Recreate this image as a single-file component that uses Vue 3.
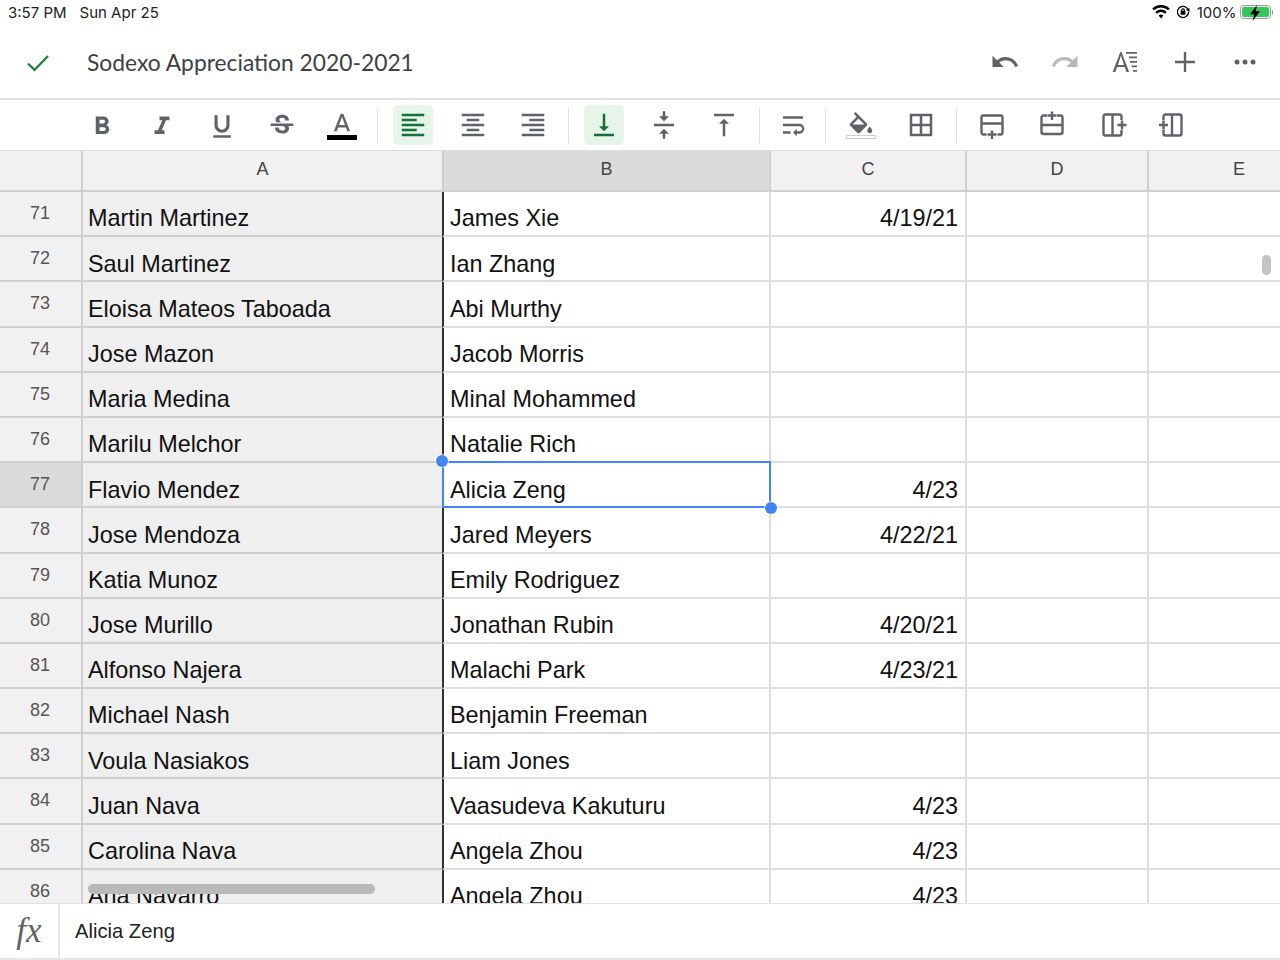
<script setup>
const rows = [
  [71, 'Martin Martinez', 'James Xie', '4/19/21'],
  [72, 'Saul Martinez', 'Ian Zhang', ''],
  [73, 'Eloisa Mateos Taboada', 'Abi Murthy', ''],
  [74, 'Jose Mazon', 'Jacob Morris', ''],
  [75, 'Maria Medina', 'Minal Mohammed', ''],
  [76, 'Marilu Melchor', 'Natalie Rich', ''],
  [77, 'Flavio Mendez', 'Alicia Zeng', '4/23'],
  [78, 'Jose Mendoza', 'Jared Meyers', '4/22/21'],
  [79, 'Katia Munoz', 'Emily Rodriguez', ''],
  [80, 'Jose Murillo', 'Jonathan Rubin', '4/20/21'],
  [81, 'Alfonso Najera', 'Malachi Park', '4/23/21'],
  [82, 'Michael Nash', 'Benjamin Freeman', ''],
  [83, 'Voula Nasiakos', 'Liam Jones', ''],
  [84, 'Juan Nava', 'Vaasudeva Kakuturu', '4/23'],
  [85, 'Carolina Nava', 'Angela Zhou', '4/23'],
  [86, 'Ana Navarro', 'Angela Zhou', '4/23'],
]

const groups = [
  [
    { shift: 1.5, d: 'M15.6 10.79c.97-.67 1.65-1.77 1.65-2.79 0-2.26-1.75-4-4-4H7v14h7.04c2.09 0 3.71-1.7 3.71-3.79 0-1.52-.86-2.82-2.15-3.42zM10 6.5h3c.83 0 1.5.67 1.5 1.5s-.67 1.5-1.5 1.5h-3v-3zm3.5 9H10v-3h3.5c.83 0 1.5.67 1.5 1.5s-.67 1.5-1.5 1.5z' },
    { shift: 1.5, d: 'M10 4v3h2.21l-3.42 8H6v3h8v-3h-2.21l3.42-8H18V4z' },
    { shift: 1.5, d: 'M12 17c3.31 0 6-2.69 6-6V3h-2.5v8c0 1.93-1.57 3.5-3.5 3.5S8.5 12.93 8.5 11V3H6v8c0 3.31 2.69 6 6 6zm-7 2v2h14v-2H5z' },
    { shift: 1, d: 'M7.24 8.75c-.26-.48-.39-1.03-.39-1.67 0-.61.13-1.16.4-1.67.26-.5.63-.93 1.11-1.29.48-.35 1.05-.63 1.7-.83.66-.19 1.39-.29 2.18-.29.81 0 1.54.11 2.21.34.66.22 1.23.54 1.69.94.47.4.83.88 1.08 1.43.25.55.38 1.15.38 1.81h-3.01c0-.31-.05-.59-.15-.85-.09-.27-.24-.49-.44-.68-.2-.19-.45-.33-.75-.44-.3-.1-.66-.16-1.06-.16-.39 0-.74.04-1.03.13-.29.09-.53.21-.72.36-.19.16-.34.34-.44.55-.1.21-.15.43-.15.66 0 .48.25.88.74 1.21.38.25.77.48 1.41.7H7.39c-.05-.08-.11-.17-.15-.25zM21 12v-2H3v2h9.62c.18.07.4.14.55.2.37.17.66.34.87.51.21.17.35.36.43.57.07.2.11.43.11.69 0 .23-.05.45-.14.66-.09.2-.23.38-.42.53-.19.15-.42.26-.71.35-.29.08-.63.13-1.01.13-.43 0-.83-.04-1.18-.13s-.66-.23-.91-.42c-.25-.19-.45-.44-.59-.75-.14-.31-.25-.76-.25-1.21H6.4c0 .55.08 1.13.24 1.58.16.45.37.85.65 1.21.28.35.6.66.98.92.37.26.78.48 1.22.65.44.17.9.3 1.38.39.48.08.96.13 1.44.13.8 0 1.53-.09 2.18-.28s1.21-.45 1.67-.79c.46-.34.82-.77 1.07-1.27s.38-1.07.38-1.71c0-.6-.1-1.14-.31-1.61-.05-.11-.11-.23-.17-.33H21z' },
    { d: 'M11 3L5.5 17h2.25l1.12-3h6.25l1.12 3h2.25L13 3h-2zm-1.38 9L12 5.67 14.38 12H9.62z', bar: 'black' },
  ],
  [
    { d: 'M15 15H3v2h12v-2zm0-8H3v2h12V7zM3 13h18v-2H3v2zm0 8h18v-2H3v2zM3 3v2h18V3H3z', active: true },
    { d: 'M7 15v2h10v-2H7zm-4 6h18v-2H3v2zm0-8h18v-2H3v2zm4-6v2h10V7H7zM3 3v2h18V3H3z' },
    { d: 'M3 21h18v-2H3v2zm6-4h12v-2H9v2zm-6-4h18v-2H3v2zm6-4h12V7H9v2zM3 3v2h18V3H3z' },
  ],
  [
    { d: 'M16 13h-3V3h-2v10H8l4 4 4-4zM4 19v2h16v-2H4z', active: true },
    { d: 'M8 19h3v4h2v-4h3l-4-4-4 4zm8-14h-3V1h-2v4H8l4 4 4-4zM4 11v2h16v-2H4z' },
    { d: 'M8 11h3v10h2V11h3l-4-4-4 4zM4 3v2h16V3H4z' },
  ],
  [
    { d: 'M4 19h6v-2H4v2zM20 5H4v2h16V5zm-3 6H4v2h13.25c1.1 0 2 .9 2 2s-.9 2-2 2H15v-2l-3 3 3 3v-2h2c2.21 0 4-1.79 4-4s-1.79-4-4-4z' },
  ],
  [
    { d: 'M16.56 8.94L7.62 0 6.21 1.41l2.38 2.38-5.15 5.15c-.59.59-.59 1.54 0 2.12l5.5 5.5c.29.29.68.44 1.06.44s.77-.15 1.06-.44l5.5-5.5c.59-.58.59-1.53 0-2.12zM5.21 10L10 5.21 14.79 10H5.21zM19 11.5s-2 2.17-2 3.5c0 1.1.9 2 2 2s2-.9 2-2c0-1.33-2-3.5-2-3.5z', shift: 2, bar: 'empty' },
    { d: 'M3 3v18h18V3H3zm8 16H5v-6h6v6zm0-8H5V5h6v6zm8 8h-6v-6h6v6zm0-8h-6V5h6v6z' },
  ],
  [
    { s: 'M9.500 24.500H6.500a2 2 0 0 1-2-2V7.500a2 2 0 0 1 2-2h17a2 2 0 0 1 2 2v15a2 2 0 0 1-2 2h-3M4.500 13.500h21M15 20.500v8.500M10.500 24.500h9' },
    { s: 'M10 5.500H6.500a2 2 0 0 0-2 2v14.500a2 2 0 0 0 2 2h17a2 2 0 0 0 2-2V7.500a2 2 0 0 0-2-2H20M4.500 15h21M15 1.500v8.500M10.500 5.500h9' },
    { s: 'M22.500 10V6.500a2 2 0 0 0-2-2h-14a2 2 0 0 0-2 2v17a2 2 0 0 0 2 2h14a2 2 0 0 0 2-2V20M13.500 4.500v21M18.500 15h9M23 10.500v9' },
    { s: 'M7.500 10V6.500a2 2 0 0 1 2-2h14a2 2 0 0 1 2 2v17a2 2 0 0 1-2 2h-14a2 2 0 0 1-2-2V20M16 4.500v21M3 15h9M7.500 10.500v9' },
  ],
]
</script>

<template>
  <div class="page">
    <div class="status">
      <span class="time">3:57 PM</span>
      <span class="date">Sun Apr 25</span>
      <span class="spacer"></span>
      <svg class="wifi" viewBox="0 0 18 14" width="18" height="14">
        <path d="M9 13.500 6.600 10.600a3.400 3.400 0 0 1 4.800 0zM4.900 8.700 3.300 6.900a8.200 8.200 0 0 1 11.400 0l-1.600 1.800a5.800 5.800 0 0 0-8.200 0zM1.900 5.300.2 3.500a12.600 12.600 0 0 1 17.600 0l-1.700 1.800a10.200 10.200 0 0 0-14.200 0z" />
      </svg>
      <svg class="lock" viewBox="0 0 14 14" width="14" height="14">
        <path d="M11.900 4.200A5.600 5.600 0 1 0 12.600 7" />
        <path class="solid" d="M10 4.800 13.600 3 13.400 7z" />
        <rect class="solid" x="4.600" y="6" width="4.800" height="3.800" rx=".6" />
        <path d="M5.700 6V5.200a1.300 1.300 0 0 1 2.600 0V6" />
      </svg>
      <span class="pct">100%</span>
      <span class="battery">
        <span class="level"></span>
        <svg class="bolt" viewBox="0 0 12 16" width="12" height="16"><path d="M8 0 1 9.200h4.200L3.600 16l7.400-9.800H6.700z" /></svg>
      </span>
      <span class="nub"></span>
    </div>

    <header class="titlebar">
      <svg class="check" viewBox="0 0 24 18" width="24" height="18"><path d="M2 9.500 8.500 16 22 2" /></svg>
      <span class="title">Sodexo Appreciation 2020-2021</span>
      <span class="spacer"></span>
      <div class="actions">
        <svg class="act" viewBox="0 0 30 30"><g transform="scale(1.25)"><path d="M12.500 8c-2.650 0-5.050.99-6.900 2.600L2 7v9h9l-3.620-3.620c1.390-1.160 3.160-1.880 5.120-1.880 3.540 0 6.550 2.310 7.600 5.500l2.370-.78C21.080 11.030 17.150 8 12.500 8z" /></g></svg>
        <svg class="act off" viewBox="0 0 30 30"><g transform="scale(1.25)"><path d="M18.400 10.600C16.550 8.990 14.150 8 11.500 8c-4.650 0-8.580 3.030-9.960 7.220L3.900 16c1.050-3.190 4.050-5.500 7.600-5.500 1.950 0 3.730.72 5.120 1.880L13 16h9V7l-3.600 3.600z" /></g></svg>
        <svg class="act" viewBox="0 0 30 30">
          <path d="M10.300 5 2.700 25h2.600l1.800-5h7.600l1.800 5h2.600L11.500 5zM7.900 18 10.900 8.500 14 18z" />
          <path d="M16 5h11v1.700H16zM19 9.500h8v1.700h-8zM20 14h7v1.700h-7zM21.500 18.500h5.500v1.700h-5.500zM23 23h4v1.700h-4z" />
        </svg>
        <svg class="act" viewBox="0 0 30 30"><path d="M13.800 5h2.400v8.800H25v2.400h-8.800V25h-2.400v-8.800H5v-2.400h8.800z" /></svg>
        <svg class="act" viewBox="0 0 30 30"><circle cx="7" cy="15" r="2.500" /><circle cx="15" cy="15" r="2.500" /><circle cx="23" cy="15" r="2.500" /></svg>
      </div>
    </header>

    <div class="toolbar">
      <template v-for="(group, g) in groups" :key="g">
        <span v-if="g > 0" class="divider" :class="'d' + g"></span>
        <div class="group" :class="'g' + g">
          <button v-for="(item, i) in group" :key="i" class="tool" :class="{ active: item.active }">
            <svg viewBox="0 0 30 30" width="30" height="30">
              <g v-if="item.d" :transform="`translate(0 ${item.shift || 0}) scale(1.25)`"><path :d="item.d" /></g>
              <path v-if="item.s" class="line" :d="item.s" />
              <rect v-if="item.bar === 'black'" class="bar" x="0" y="25" width="30" height="5" />
              <rect v-if="item.bar === 'empty'" class="bar-empty" x=".5" y="25.500" width="29" height="3" />
            </svg>
          </button>
        </div>
      </template>
    </div>

    <main class="sheet-wrap">
      <div class="sheet">
        <div class="corner"></div>
        <div class="col first">A</div>
        <div class="col on">B</div>
        <div class="col">C</div>
        <div class="col">D</div>
        <div class="col">E</div>
        <template v-for="r in rows" :key="r[0]">
          <div class="num" :class="{ on: r[0] === 77 }">{{ r[0] }}</div>
          <div class="cell frozen">{{ r[1] }}</div>
          <div class="cell second">
            {{ r[2] }}
            <div v-if="r[0] === 77" class="selection">
              <span class="handle tl"></span>
              <span class="handle br"></span>
            </div>
          </div>
          <div class="cell right">{{ r[3] }}</div>
          <div class="cell"></div>
          <div class="cell"></div>
        </template>
      </div>
      <div class="hscroll"></div>
      <div class="vscroll"></div>
    </main>

    <footer class="formula">
      <span class="fx">fx</span>
      <span class="value">Alicia Zeng</span>
    </footer>
  </div>
</template>

<style>
html, body { margin: 0; background: #fff; }
</style>

<style scoped>
.page {
  width: 1280px;
  height: 960px;
  display: flex;
  flex-direction: column;
  overflow: hidden;
  background: #fff;
  font-family: "Liberation Sans", Arial, sans-serif;
}
.spacer { flex: 1; }

.status {
  height: 27px;
  flex: none;
  display: flex;
  align-items: center;
  padding: 0 7px 3px 8px;
  box-sizing: border-box;
  font-family: Inter, "Liberation Sans", sans-serif;
  font-size: 15px;
  color: #222;
}
.date { margin-left: 13px; }
.wifi { fill: #000; margin-right: 6px; }
.lock { fill: none; stroke: #000; stroke-width: 1.3; margin-right: 7px; }
.lock .solid { fill: #000; stroke: none; }
.pct { font-size: 15px; margin-right: 3px; }
.battery {
  position: relative;
  width: 27px;
  height: 10px;
  border: 1px solid #9a9a9a;
  border-radius: 3.500px;
  padding: 1px;
  display: block;
}
.level { display: block; height: 100%; background: #34c759; border-radius: 2px; }
.bolt { position: absolute; left: 8px; top: -1px; fill: #000; }
.nub { width: 1.500px; height: 5px; margin-left: 1px; background: #9a9a9a; border-radius: 0 1px 1px 0; }

.titlebar {
  height: 73px;
  flex: none;
  display: flex;
  align-items: center;
  padding-left: 26px;
  border-bottom: 2px solid #e0e0e0;
  box-sizing: border-box;
}
.check { fill: none; stroke: #188038; stroke-width: 2.200; }
.title {
  margin: 0 0 2px 37px;
  font-family: Lato, Roboto, sans-serif;
  font-size: 22.800px;
  color: #3c4043;
}
.actions { display: flex; gap: 30px; margin: 0 20px 2px 0; }
.act { width: 30px; height: 30px; fill: #5f6368; display: block; }
.act.off { fill: #b8b8b8; }

.toolbar {
  height: 50px;
  flex: none;
  display: flex;
  align-items: center;
  padding-left: 82px;
  box-sizing: border-box;
}
.group { display: flex; gap: 20px; }
.tool {
  width: 40px;
  height: 40px;
  padding: 0;
  border: 0;
  border-radius: 5px;
  background: none;
  display: flex;
  align-items: center;
  justify-content: center;
  fill: #5f6368;
}
.tool.active { background: #e6f4ea; fill: #137333; }
.line { fill: none; stroke: #5f6368; stroke-width: 2.400; }
.bar { fill: #000; }
.bar-empty { fill: #fff; stroke: #ccc; }
.divider { width: 1px; height: 35px; margin: 0 15px; background: #e0e0e0; flex: none; }
.d3 { margin-right: 13px; }
.d4 { margin-left: 12px; }
.g5 .tool:nth-child(3) { margin-left: 2px; }
.g5 .tool:nth-child(4) { margin-left: -3px; }

.sheet-wrap {
  position: relative;
  flex: 1;
  min-height: 0;
  overflow: hidden;
}
.sheet {
  display: grid;
  grid-template-columns: 83px 359px 329px 196px 182px 182px;
  grid-template-rows: 41px;
  grid-auto-rows: 45.200px;
  border-top: 1px solid #dcdcdc;
  color: #111;
}
.corner, .col, .num {
  background: #f1f1f1;
  box-sizing: border-box;
  border-right: 2px solid #cfcfcf;
  border-bottom: 2px solid #cfcfcf;
}
.col {
  display: flex;
  align-items: center;
  justify-content: center;
  font-size: 18px;
  color: #444;
  padding-bottom: 3px;
}
.col.first { border-right: 0; }
.col.on, .num.on { background: #dbdbdb; }
.col.on { border-left: 2px solid #cfcfcf; }
.num {
  display: flex;
  justify-content: center;
  font-size: 18px;
  color: #555;
  padding: 10px 1px 0 0;
  line-height: 22px;
}
.cell {
  position: relative;
  box-sizing: border-box;
  border-right: 2px solid #dedede;
  border-bottom: 2px solid #dedede;
  font-size: 23.400px;
  line-height: 28px;
  padding: 12.400px 6px 0;
  white-space: nowrap;
}
.frozen { background: #efefef; border-color: #cfcfcf; border-right: 0; padding-left: 5px; }
.second { border-left: 2px solid #333; }
.right { text-align: right; padding-right: 7px; }
.selection {
  position: absolute;
  z-index: 2;
  left: -2px;
  top: -2px;
  right: -2px;
  bottom: -2px;
  border: 2px solid #4285f4;
}
.handle {
  position: absolute;
  width: 12px;
  height: 12px;
  border-radius: 50%;
  background: #4285f4;
  box-shadow: 0 0 0 1px rgba(255, 255, 255, .7);
}
.tl { left: -8px; top: -8px; }
.br { right: -8px; bottom: -8px; }
.hscroll {
  position: absolute;
  left: 88px;
  top: 734px;
  width: 287px;
  height: 9.500px;
  border-radius: 5px;
  background: #b9b9b9;
}
.vscroll {
  position: absolute;
  left: 1262px;
  top: 105px;
  width: 9px;
  height: 20px;
  border-radius: 5px;
  background: #c4c4c4;
}

.formula {
  height: 57px;
  flex: none;
  box-sizing: border-box;
  display: flex;
  align-items: center;
  background: #fff;
  border-top: 1px solid #e0e0e0;
  border-bottom: 2px solid #e6e6e6;
  position: relative;
}
.fx {
  width: 60px;
  height: 100%;
  flex: none;
  box-sizing: border-box;
  border-right: 2px solid #e6e6e6;
  display: flex;
  align-items: center;
  justify-content: center;
  font-family: "Liberation Serif", serif;
  font-style: italic;
  font-size: 35px;
  color: #5f6368;
}
.value { margin-left: 15px; font-size: 20.200px; color: #222; }
</style>
